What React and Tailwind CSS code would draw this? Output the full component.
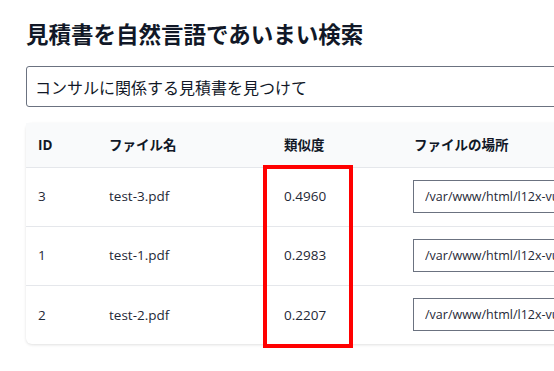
import React from 'react';

const rows = [
    { id: 3, name: 'test-3.pdf', score: '0.4960' },
    { id: 1, name: 'test-1.pdf', score: '0.2983' },
    { id: 2, name: 'test-2.pdf', score: '0.2207' },
];

const App = () => {
    return (
        <div
            className="w-[554px] h-[371px] overflow-hidden bg-white text-[#1f2937]"
            style={{ fontFamily: '"Open Sans", "Noto Sans CJK JP", sans-serif' }}
        >
            <div className="w-[800px] pl-[26px] pt-[18px]">
                <h1 className="text-[22.5px] font-bold leading-[34px] text-[#111827]">見積書を自然言語であいまい検索</h1>

                <input
                    readOnly
                    value="コンサルに関係する見積書を見つけて"
                    className="mt-[14px] w-[700px] h-[41px] px-[8px] border border-[#6b7280] rounded-[3px] text-[16px] text-[#111827] outline-none"
                />

                <div className="relative mt-[16px] w-[700px] rounded-md bg-white shadow-[0_1px_3px_rgba(0,0,0,0.12)]">
                    <table className="w-full text-[13.5px] border-collapse">
                        <thead>
                            <tr className="bg-[#f9fafb] h-[44px] text-left text-[#111827]">
                                <th className="w-[71px] pl-[12px] font-bold">ID</th>
                                <th className="w-[175px] pl-[12px] font-bold">ファイル名</th>
                                <th className="w-[130px] pl-[12px] font-bold">類似度</th>
                                <th className="pl-[12px] font-bold">ファイルの場所</th>
                            </tr>
                        </thead>
                        <tbody>
                            {rows.map((r) => (
                                <tr key={r.id} className="h-[59px] border-t border-[#e5e7eb]">
                                    <td className="pl-[12px]">{r.id}</td>
                                    <td className="pl-[12px]">{r.name}</td>
                                    <td className="pl-[12px]">{r.score}</td>
                                    <td className="pl-[11px]">
                                        <input
                                            readOnly
                                            value="/var/www/html/l12x-vue/storage/app/pdfs"
                                            className="w-[260px] h-[33px] px-[11px] border border-[#6b7280] text-[12.5px] outline-none"
                                        />
                                    </td>
                                </tr>
                            ))}
                        </tbody>
                    </table>

                    {/* highlight around the score column */}
                    <div className="absolute left-[237px] top-[42px] w-[90px] h-[183px] border-[4px] border-[#ff0000]" />
                </div>
            </div>
        </div>
    );
};

export default App;
